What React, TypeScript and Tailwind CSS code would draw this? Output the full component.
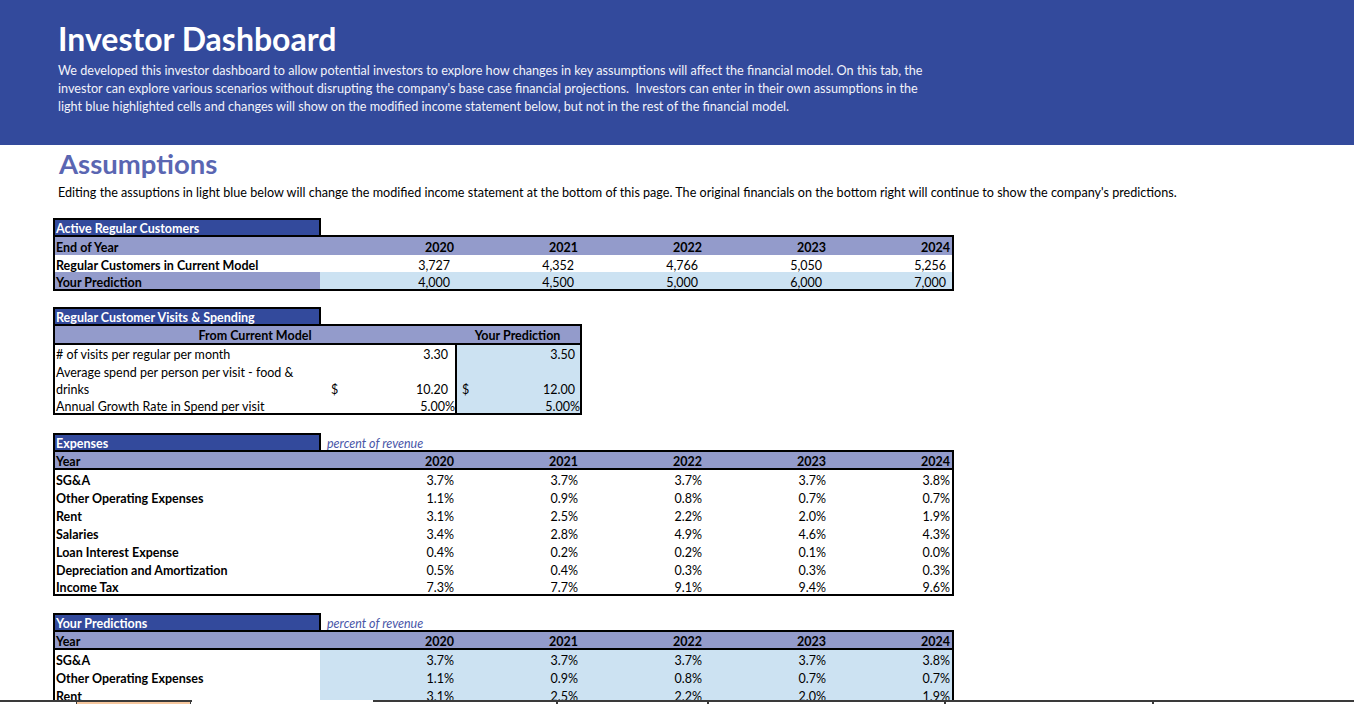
import React from "react";

const YEARS = ["2020", "2021", "2022", "2023", "2024"];

const EXPENSES: [string, string[]][] = [
  ["SG&A", ["3.7%", "3.7%", "3.7%", "3.7%", "3.8%"]],
  ["Other Operating Expenses", ["1.1%", "0.9%", "0.8%", "0.7%", "0.7%"]],
  ["Rent", ["3.1%", "2.5%", "2.2%", "2.0%", "1.9%"]],
  ["Salaries", ["3.4%", "2.8%", "4.9%", "4.6%", "4.3%"]],
  ["Loan Interest Expense", ["0.4%", "0.2%", "0.2%", "0.1%", "0.0%"]],
  ["Depreciation and Amortization", ["0.5%", "0.4%", "0.3%", "0.3%", "0.3%"]],
  ["Income Tax", ["7.3%", "7.7%", "9.1%", "9.4%", "9.6%"]],
];

function TitleBox({ title, note }: { title: string; note?: string }) {
  return (
    <div className="flex items-end">
      <div className="w-[268px] h-[17px] border-t-2 border-x-2 border-black bg-[#334A9C] text-white font-bold text-[12.5px] leading-[15px] pl-[1px] pt-[1px] whitespace-nowrap">
        {title}
      </div>
      {note && (
        <div className="pl-[6px] italic text-[#4A57A8] text-[12.5px] leading-[13px] whitespace-nowrap">
          {note}
        </div>
      )}
    </div>
  );
}

function YearHeader({ label, line }: { label: string; line: boolean }) {
  return (
    <div
      className={
        line
          ? "flex h-[18px] bg-[#939BCB] font-bold items-end leading-[13px] border-b-2 border-black"
          : "flex h-[18px] bg-[#939BCB] font-bold items-end leading-[15px]"
      }
    >
      <div className="w-[265px] pl-[1px]">{label}</div>
      <div className="w-[12px]" />
      {YEARS.map((y) => (
        <div key={y} className="w-[124px] text-right pr-[2px]">
          {y}
        </div>
      ))}
    </div>
  );
}

function ExpenseTable({ title, shaded }: { title: string; shaded: boolean }) {
  return (
    <div>
      <TitleBox title={title} note="percent of revenue" />
      <div className="w-[901px] border-2 border-black text-[12.5px] text-black">
        <YearHeader label="Year" line={true} />
        {EXPENSES.map(([label, vals], i) => (
          <div
            key={label}
            className={
              i === EXPENSES.length - 1
                ? "flex h-[16px] items-end leading-[13px]"
                : "flex h-[18px] items-end leading-[15px]"
            }
          >
            <div className="w-[265px] pl-[1px] font-bold h-full flex items-end">{label}</div>
            <div
              className={
                shaded
                  ? "flex h-full items-end bg-[#CCE2F2]"
                  : "flex h-full items-end"
              }
            >
              <div className="w-[12px]" />
              {vals.map((v, j) => (
                <div key={j} className="w-[124px] text-right pr-[2px]">
                  {v}
                </div>
              ))}
            </div>
          </div>
        ))}
      </div>
    </div>
  );
}

export default function App() {
  return (
    <div className="relative w-[1354px] h-[704px] overflow-hidden bg-white font-['Lato','Noto_Sans',sans-serif] text-black">
      {/* Header band */}
      <div className="h-[145px] bg-[#334A9C] text-white">
        <div className="pl-[58px] pt-[21px] text-[32px] leading-[36px] font-bold">
          Investor Dashboard
        </div>
        <div className="pl-[58px] mt-[5px] text-[12.65px] leading-[18px] text-[#F2F3FA]">
          <div className="whitespace-nowrap">
            We developed this investor dashboard to allow potential investors to explore how changes in key assumptions will affect the financial model. On this tab, the
          </div>
          <div className="whitespace-nowrap">
            investor can explore various scenarios without disrupting the company's base case financial projections.&nbsp; Investors can enter in their own assumptions in the
          </div>
          <div className="whitespace-nowrap">
            light blue highlighted cells and changes will show on the modified income statement below, but not in the rest of the financial model.
          </div>
        </div>
      </div>

      {/* Assumptions */}
      <div className="pl-[59px] mt-[3px] text-[27.5px] leading-[32px] font-bold text-[#5A66B2]">
        Assumptions
      </div>
      <div className="pl-[58px] mt-[5px] text-[12.6px] leading-[16px] whitespace-nowrap">
        Editing the assuptions in light blue below will change the modified income statement at the bottom of this page. The original financials on the bottom right will continue to show the company's predictions.
      </div>

      <div className="ml-[53px]">
        {/* Table 1 */}
        <div className="mt-[17px]">
          <TitleBox title="Active Regular Customers" />
          <div className="w-[901px] border-2 border-black text-[12.5px]">
            <YearHeader label="End of Year" line={false} />
            <div className="flex h-[17px] items-end leading-[13px]">
              <div className="w-[265px] pl-[1px] font-bold">Regular Customers in Current Model</div>
              <div className="w-[12px]" />
              {["3,727", "4,352", "4,766", "5,050", "5,256"].map((v, j) => (
                <div key={j} className="w-[124px] text-right pr-[6px]">
                  {v}
                </div>
              ))}
            </div>
            <div className="flex h-[17px] items-end leading-[13px]">
              <div className="w-[265px] h-full pl-[1px] font-bold bg-[#939BCB] flex items-end">Your Prediction</div>
              <div className="flex h-full items-end bg-[#CCE2F2]">
                <div className="w-[12px]" />
                {["4,000", "4,500", "5,000", "6,000", "7,000"].map((v, j) => (
                  <div key={j} className="w-[124px] text-right pr-[6px]">
                    {v}
                  </div>
                ))}
              </div>
            </div>
          </div>
        </div>

        {/* Table 2 */}
        <div className="mt-[16px]">
          <TitleBox title="Regular Customer Visits & Spending" />
          <div className="w-[529px] border-2 border-black text-[12.5px]">
            <div className="flex h-[19px] bg-[#939BCB] font-bold items-end leading-[14px] border-b-2 border-black">
              <div className="w-[400px] text-center">From Current Model</div>
              <div className="w-[125px] text-center">Your Prediction</div>
            </div>
            <div className="flex">
              <div className="w-[265px] pl-[1px]">
                <div className="h-[17px] flex items-end leading-[14px]"># of visits per regular per month</div>
                <div className="h-[35px] flex items-end leading-[17px]">
                  <div className="-mb-[1px]">
                    Average spend per person per visit - food &amp;
                    <br />
                    drinks
                  </div>
                </div>
                <div className="h-[16px] flex items-end leading-[13px]">Annual Growth Rate in Spend per visit</div>
              </div>
              <div className="w-[135px]">
                <div className="h-[17px] flex items-end justify-end leading-[14px] pr-[7px]">3.30</div>
                <div className="h-[35px] flex items-end justify-between leading-[15px] pl-[11px] pr-[7px]">
                  <span>$</span>
                  <span>10.20</span>
                </div>
                <div className="h-[16px] flex items-end justify-end leading-[13px]">5.00%</div>
              </div>
              <div className="w-[125px] border-l-2 border-black bg-[#CCE2F2]">
                <div className="h-[17px] flex items-end justify-end leading-[14px] pr-[5px]">3.50</div>
                <div className="h-[35px] flex items-end justify-between leading-[15px] pl-[5px] pr-[5px]">
                  <span>$</span>
                  <span>12.00</span>
                </div>
                <div className="h-[16px] flex items-end justify-end leading-[13px]">5.00%</div>
              </div>
            </div>
          </div>
        </div>

        {/* Table 3 */}
        <div className="mt-[18px]">
          <ExpenseTable title="Expenses" shaded={false} />
        </div>

        {/* Table 4 */}
        <div className="mt-[17px]">
          <ExpenseTable title="Your Predictions" shaded={true} />
        </div>
      </div>

      {/* Bottom strip overlay */}
      <div className="absolute left-0 top-[700px] w-[1354px] h-[4px] bg-white">
        <div className="absolute left-0 top-0 w-[192px] h-[2px] bg-[#3A3A3A]" />
        <div className="absolute left-[76px] top-[2px] w-[115px] h-[2px] bg-[#F6C79E] border-x border-[#3A3A3A]" />
        <div className="absolute left-[373px] top-0 w-[981px] h-[2px] bg-[#3A3A3A]" />
        <div className="absolute left-[556px] top-[2px] w-[2px] h-[2px] bg-[#3A3A3A]" />
        <div className="absolute left-[707px] top-[2px] w-[2px] h-[2px] bg-[#3A3A3A]" />
        <div className="absolute left-[944px] top-[2px] w-[2px] h-[2px] bg-[#3A3A3A]" />
        <div className="absolute left-[1152px] top-[2px] w-[2px] h-[2px] bg-[#3A3A3A]" />
      </div>
    </div>
  );
}
